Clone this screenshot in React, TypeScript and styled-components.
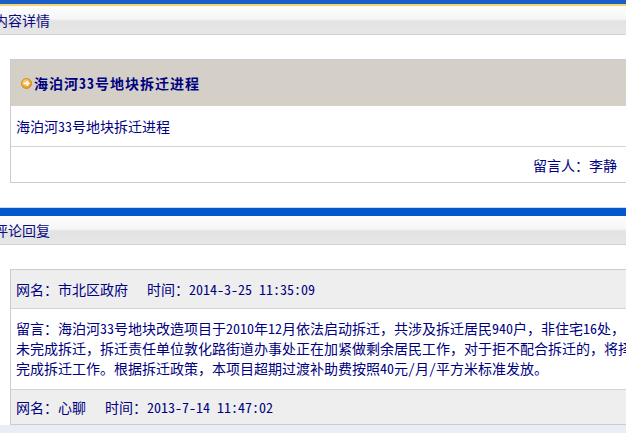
import React from 'react';
import styled, { createGlobalStyle } from 'styled-components';

const GlobalStyle = createGlobalStyle`
  html, body {
    margin: 0;
    padding: 0;
    overflow: hidden;
    background: #ffffff;
  }
  body {
    font-family: "Noto Sans Mono CJK SC", "Noto Sans CJK SC", sans-serif;
    font-size: 14px;
    color: #000080;
  }
`;

const Page = styled.div`
  width: 640px;
`;

const Stripe = styled.div<{ $top?: boolean }>`
  height: ${(p) => (p.$top ? '4px' : '8px')};
  background: ${(p) => (p.$top ? '#1c5ec9' : '#0558cc')};
  border-top: ${(p) => (p.$top ? 'none' : '1px solid #c9daf0')};
  border-bottom: ${(p) => (p.$top ? '2px solid #f4d46e' : 'none')};
`;

const HeaderBar = styled.div`
  height: 28px;
  display: flex;
  align-items: center;
  background: linear-gradient(#fdfdfd 0%, #f6f6f6 45%, #e3e3e3 55%, #e6e6e6 100%);
  border-bottom: 1px solid #d2d2d2;
  overflow: hidden;
`;

const HeaderTitle = styled.span`
  margin-left: -6px;
  font-size: 14px;
  line-height: 28px;
  color: #0c0c84;
  white-space: nowrap;
`;

const Body = styled.div`
  padding: 24px 10px;
`;

const Box = styled.div`
  border: 1px solid #cccccc;
  overflow: hidden;
`;

const BoxHead = styled.div`
  height: 46px;
  display: flex;
  align-items: center;
  gap: 2px;
  padding-left: 10px;
  background: #d4d0c8;
`;

const BoxTitle = styled.h1`
  margin: 0;
  font-size: 14px;
  font-weight: bold;
  letter-spacing: 1px;
  color: #000080;
  white-space: nowrap;
`;

const Row = styled.div<{ $h: number; $right?: boolean }>`
  height: ${(p) => p.$h}px;
  display: flex;
  align-items: center;
  justify-content: ${(p) => (p.$right ? 'flex-end' : 'flex-start')};
  padding: 0 12px 0 5px;
  & + & {
    border-top: 1px solid #d4d4d4;
  }
`;

const Meta = styled.div<{ $h: number }>`
  height: ${(p) => p.$h}px;
  display: flex;
  align-items: center;
  gap: 19px;
  padding-left: 5px;
  background: #eeeeee;
  white-space: nowrap;
`;

const Message = styled.div`
  padding: 9px 5px 11px;
  line-height: 20px;
  white-space: nowrap;
  background: #ffffff;
  border-top: 1px solid #d4d4d4;
  border-bottom: 1px solid #d4d4d4;
`;

const Footer = styled.div`
  height: 20px;
  background: #e9eef6;
`;

const CommentBody = styled(Body)`
  padding-bottom: 0;
`;

const ArrowIcon = () => (
  <svg width="11" height="11" viewBox="0 0 11 11">
    <defs>
      <radialGradient id="og" cx="40%" cy="35%" r="70%">
        <stop offset="0%" stopColor="#ffd77a" />
        <stop offset="100%" stopColor="#e8950f" />
      </radialGradient>
    </defs>
    <circle cx="5.5" cy="5.5" r="5" fill="url(#og)" stroke="#c98210" strokeWidth="0.8" />
    <path d="M2.6 5.5 H7.6 M5.6 3.4 L7.8 5.5 L5.6 7.6" stroke="#ffffff" strokeWidth="1.5" fill="none" />
  </svg>
);

export default function App() {
  return (
    <Page>
      <GlobalStyle />
      <section>
        <Stripe $top />
        <HeaderBar>
          <HeaderTitle>内容详情</HeaderTitle>
        </HeaderBar>
        <Body>
          <Box>
            <BoxHead>
              <ArrowIcon />
              <BoxTitle>海泊河33号地块拆迁进程</BoxTitle>
            </BoxHead>
            <Row $h={40}>海泊河33号地块拆迁进程</Row>
            <Row $h={35} $right>留言人：李静</Row>
          </Box>
        </Body>
      </section>
      <section>
        <Stripe />
        <HeaderBar>
          <HeaderTitle>评论回复</HeaderTitle>
        </HeaderBar>
        <CommentBody>
          <Box>
            <Meta $h={38}>
              <span>网名：市北区政府</span>
              <span>时间：2014-3-25 11:35:09</span>
            </Meta>
            <Message>
              留言：海泊河33号地块改造项目于2010年12月依法启动拆迁，共涉及拆迁居民940户，非住宅16处，目前尚有少数居民
              <br />
              未完成拆迁，拆迁责任单位敦化路街道办事处正在加紧做剩余居民工作，对于拒不配合拆迁的，将择期依法
              <br />
              完成拆迁工作。根据拆迁政策，本项目超期过渡补助费按照40元/月/平方米标准发放。
            </Message>
            <Meta $h={34}>
              <span>网名：心聊</span>
              <span>时间：2013-7-14 11:47:02</span>
            </Meta>
          </Box>
        </CommentBody>
        <Footer />
      </section>
    </Page>
  );
}
